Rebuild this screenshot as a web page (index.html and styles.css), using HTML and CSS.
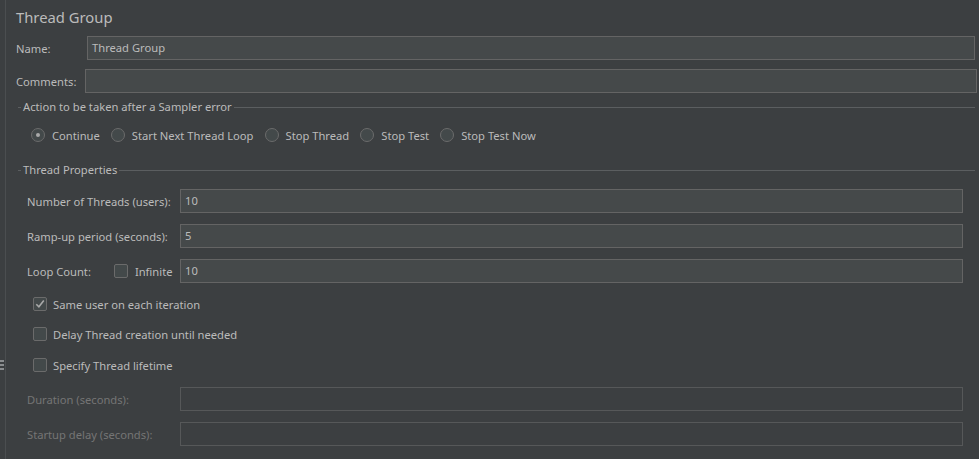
FILE: index.html
```html
<!DOCTYPE html>
<html>
<head>
<meta charset="utf-8">
<link rel="stylesheet" href="styles.css">
</head>
<body>
<div class="app">
  <div class="splitter">
    <div class="grip"><span></span><span></span><span></span></div>
  </div>
  <div class="main">
    <div class="title">Thread Group</div>

    <div class="row name-row">
      <label class="lbl lbl-name">Name:</label>
      <div class="field">Thread Group</div>
    </div>
    <div class="row comments-row">
      <label class="lbl lbl-comments">Comments:</label>
      <div class="field"></div>
    </div>

    <div class="section-head sh-action">
      <span class="dash"></span><span class="sh-text">Action to be taken after a Sampler error</span><span class="rule"></span>
    </div>

    <div class="radios">
      <div class="radio-item"><span class="radio checked"></span><span>Continue</span></div>
      <div class="radio-item"><span class="radio"></span><span>Start Next Thread Loop</span></div>
      <div class="radio-item"><span class="radio"></span><span>Stop Thread</span></div>
      <div class="radio-item"><span class="radio"></span><span>Stop Test</span></div>
      <div class="radio-item"><span class="radio"></span><span>Stop Test Now</span></div>
    </div>

    <div class="section-head sh-props">
      <span class="dash"></span><span class="sh-text">Thread Properties</span><span class="rule"></span>
    </div>

    <div class="props">
      <div class="prow pr-first">
        <label class="plbl">Number of Threads (users):</label>
        <div class="field">10</div>
      </div>
      <div class="prow">
        <label class="plbl">Ramp-up period (seconds):</label>
        <div class="field">5</div>
      </div>
      <div class="prow">
        <label class="plbl loop">Loop Count:<span class="inf"><span class="check"></span>Infinite</span></label>
        <div class="field">10</div>
      </div>

      <div class="crow cr-1"><span class="check checked"><svg viewBox="0 0 14 14" width="14" height="14"><path d="M3.3 7.2 L5.9 9.8 L10.8 3.6" fill="none" stroke="#a9a9a9" stroke-width="1.6"/></svg></span>Same user on each iteration</div>
      <div class="crow cr-2"><span class="check"></span>Delay Thread creation until needed</div>
      <div class="crow cr-3"><span class="check"></span>Specify Thread lifetime</div>

      <div class="prow disabled pr-dur">
        <label class="plbl">Duration (seconds):</label>
        <div class="field"></div>
      </div>
      <div class="prow disabled">
        <label class="plbl">Startup delay (seconds):</label>
        <div class="field"></div>
      </div>
    </div>
  </div>
</div>
</body>
</html>
```

FILE: styles.css
```css
* { box-sizing: border-box; }
html, body { margin: 0; padding: 0; }
body {
  background: #3c3f41;
  color: #bbbbbb;
  font-family: "Noto Sans", "Open Sans", sans-serif;
  font-size: 11.2px;
  width: 979px;
  height: 459px;
  overflow: hidden;
  white-space: nowrap;
}
.app {
  display: flex;
  height: 459px;
}
.splitter {
  width: 6px;
  border-right: 1px solid #4b4e50;
  padding-top: 360px;
}
.grip {
  display: flex;
  flex-direction: column;
  gap: 2px;
}
.grip span {
  display: block;
  width: 4px;
  height: 2px;
  background: #8a8d8f;
}
.main {
  flex: 1;
  padding-left: 10px;
}
.title {
  margin-top: 6px;
  height: 22px;
  line-height: 22px;
  font-size: 14.8px;
  color: #bbbbbb;
}
.row {
  display: flex;
  align-items: center;
  height: 24px;
}
.name-row { margin-top: 8px; padding-right: 4px; }
.comments-row { margin-top: 9px; padding-right: 2px; }
.lbl-name { width: 71px; }
.lbl-comments { width: 69px; }
.field {
  flex: 1;
  height: 24px;
  background: #45494a;
  border: 1px solid #646464;
  padding-left: 4px;
  line-height: 22px;
  color: #bbbbbb;
}
.section-head {
  display: flex;
  align-items: center;
  height: 14px;
  margin-left: 2px;
  padding-right: 4px;
}
.section-head .dash {
  width: 3px;
  height: 1px;
  background: #5b5e60;
}
.section-head .sh-text {
  padding: 0 2px;
  line-height: 14px;
}
.section-head .rule {
  flex: 1;
  height: 1px;
  background: #5b5e60;
}
.sh-action { margin-top: 7px; }
.sh-props { margin-top: 21px; }
.radios {
  display: flex;
  align-items: center;
  height: 14px;
  margin-top: 14px;
  padding-left: 15px;
  gap: 11px;
}
.radio-item {
  display: flex;
  align-items: center;
  gap: 7px;
}
.radio {
  width: 14px;
  height: 14px;
  border-radius: 50%;
  border: 1px solid #6b6b6b;
  background: #43494a;
  position: relative;
}
.radio.checked::after {
  content: "";
  position: absolute;
  left: 4px;
  top: 4px;
  width: 4px;
  height: 4px;
  border-radius: 50%;
  background: #a9a9a9;
}
.props {
  padding-left: 11px;
  padding-right: 16px;
}
.prow {
  display: flex;
  align-items: center;
  height: 24px;
  margin-top: 11px;
}
.pr-first { margin-top: 12px; }
.plbl {
  width: 153px;
  flex: none;
  display: flex;
  align-items: center;
}
.loop .inf {
  display: flex;
  align-items: center;
  gap: 7px;
  margin-left: 23px;
}
.check {
  width: 14px;
  height: 14px;
  border: 1px solid #6b6b6b;
  border-radius: 2px;
  background: #43494a;
  display: inline-block;
  position: relative;
  flex: none;
}
.check svg {
  position: absolute;
  left: -1px;
  top: -1px;
}
.crow {
  display: flex;
  align-items: center;
  gap: 6px;
  height: 14px;
  padding-left: 6px;
}
.cr-1 { margin-top: 14px; }
.cr-2 { margin-top: 16px; }
.cr-3 { margin-top: 17px; }
.pr-dur { margin-top: 15px; }
.disabled .plbl { color: #757575; }
.disabled .field {
  background: #3c3f41;
  border-color: #565859;
}
```
